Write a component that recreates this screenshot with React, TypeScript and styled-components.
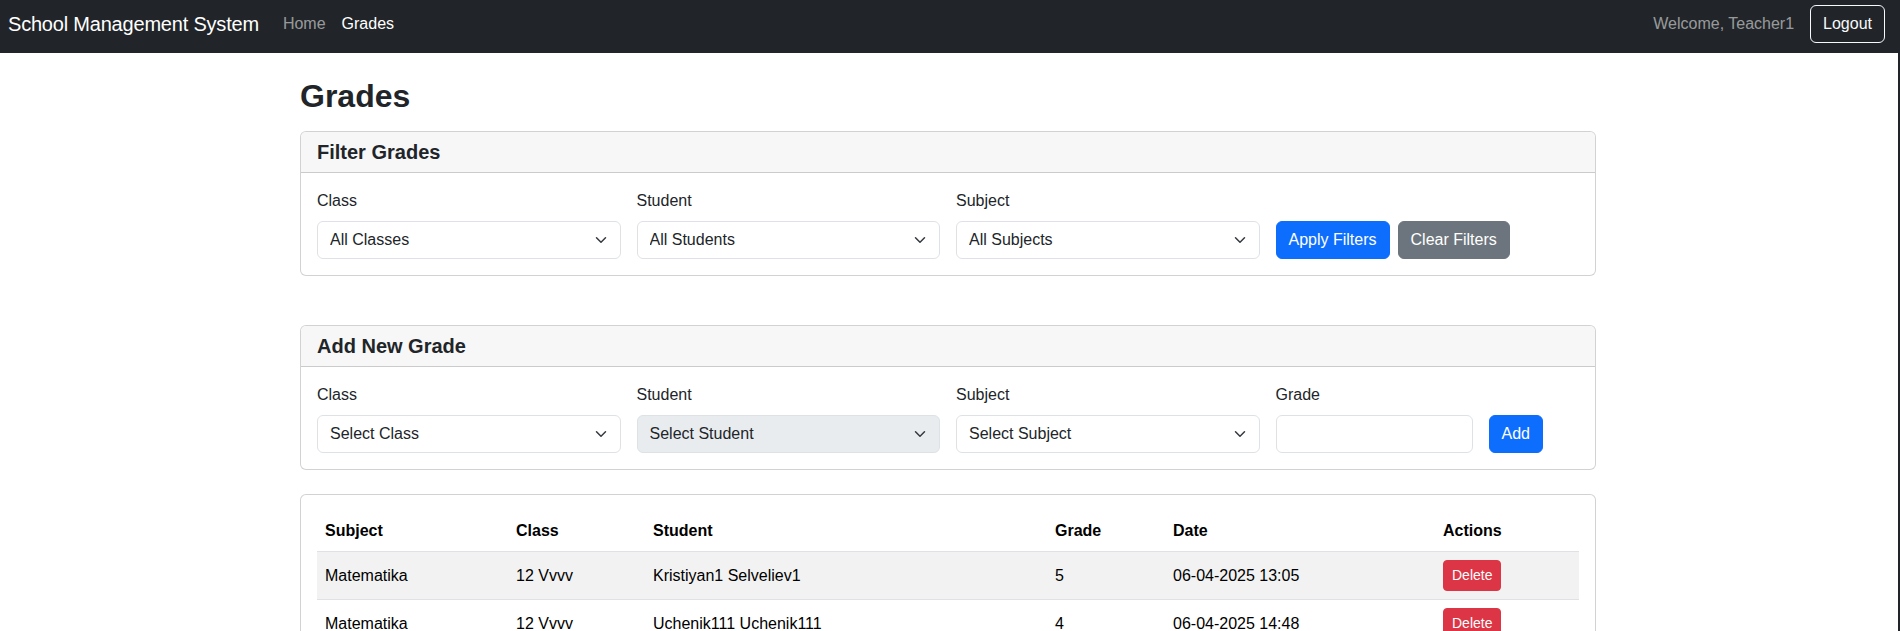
import React, { FC, ReactNode } from "react"
import styled, { createGlobalStyle } from "styled-components"

const GlobalStyle = createGlobalStyle`
  *, *::before, *::after {
    box-sizing: border-box;
  }
  body {
    margin: 0;
    font-family: "Liberation Sans", Arial, sans-serif;
    font-size: 16px;
    line-height: 1.5;
    color: rgb(33, 37, 41);
    background-color: rgb(255, 255, 255);
  }
`

const Shell = styled.div`
  min-height: 631px;
  border-right: 2px solid rgb(33, 37, 41);
`

const Navbar = styled.nav`
  display: flex;
  align-items: center;
  height: 53px;
  padding: 5px 13px 10px 8px;
  background-color: rgb(33, 37, 41);
`

const Brand = styled.a`
  margin-right: 16px;
  font-size: 20px;
  line-height: 30px;
  letter-spacing: -0.2px;
  color: rgb(255, 255, 255);
  text-decoration: none;
  white-space: nowrap;
`

const NavList = styled.ul`
  display: flex;
  margin: 0;
  padding: 0;
  list-style: none;
`

const NavLink = styled.a<{ active?: boolean }>`
  display: block;
  padding: 0 8px;
  color: ${props => (props.active ? "rgb(255, 255, 255)" : "rgba(255, 255, 255, 0.55)")};
  text-decoration: none;
`

const Spacer = styled.div`
  flex: 1;
`

const Welcome = styled.span`
  margin-right: 16px;
  color: rgba(255, 255, 255, 0.55);
`

const Button = styled.button<{ variant?: "primary" | "secondary" | "danger" | "light"; small?: boolean }>`
  display: inline-block;
  padding: ${props => (props.small ? "4px 8px" : "6px 12px")};
  font-family: inherit;
  font-size: ${props => (props.small ? "14px" : "16px")};
  line-height: 1.5;
  border-radius: ${props => (props.small ? "4px" : "6px")};
  border: 1px solid
    ${props =>
      props.variant === "secondary"
        ? "rgb(108, 117, 125)"
        : props.variant === "danger"
        ? "rgb(220, 53, 69)"
        : props.variant === "light"
        ? "rgb(248, 249, 250)"
        : "rgb(13, 110, 253)"};
  background-color: ${props =>
    props.variant === "secondary"
      ? "rgb(108, 117, 125)"
      : props.variant === "danger"
      ? "rgb(220, 53, 69)"
      : props.variant === "light"
      ? "transparent"
      : "rgb(13, 110, 253)"};
  color: ${props => (props.variant === "light" ? "rgb(248, 249, 250)" : "rgb(255, 255, 255)")};
  white-space: nowrap;
  cursor: pointer;
`

const Main = styled.main`
  max-width: 1320px;
  margin: 0 auto;
  padding: 24px 12px 0;
  position: relative;
  left: -1px;
`

const PageTitle = styled.h2`
  margin: 0 0 16px;
  font-size: 32px;
  font-weight: 700;
  line-height: 1.2;
`

const Card = styled.section<{ gapBelow?: number }>`
  margin-bottom: ${props => props.gapBelow ?? 24}px;
  border: 1px solid rgba(0, 0, 0, 0.175);
  border-radius: 6px;
  background-color: rgb(255, 255, 255);
`

const CardHeader = styled.div`
  padding: 8px 16px;
  background-color: rgb(247, 247, 247);
  border-bottom: 1px solid rgba(0, 0, 0, 0.175);
  border-radius: 5px 5px 0 0;
`

const CardTitle = styled.h5`
  margin: 0;
  font-size: 20px;
  font-weight: 700;
  line-height: 1.2;
`

const CardBody = styled.div`
  padding: 16px;
`

const FormGrid = styled.div`
  display: grid;
  grid-template-columns: repeat(12, 1fr);
  column-gap: 16px;
`

const Field = styled.div<{ span: number }>`
  grid-column: span ${props => props.span};
  display: flex;
  flex-direction: column;
`

const ButtonCell = styled.div<{ span: number }>`
  grid-column: span ${props => props.span};
  display: flex;
  align-items: flex-end;
  gap: 8px;
`

const Label = styled.label`
  display: block;
  margin-bottom: 8px;
`

const SelectWrap = styled.div`
  position: relative;
`

const Select = styled.select`
  display: block;
  width: 100%;
  height: 38px;
  padding: 6px 36px 6px 12px;
  font-family: inherit;
  font-size: 16px;
  line-height: 1.5;
  color: rgb(33, 37, 41);
  background-color: rgb(255, 255, 255);
  border: 1px solid rgb(222, 226, 230);
  border-radius: 6px;
  appearance: none;
  outline: none;

  &:disabled {
    color: rgb(33, 37, 41);
    background-color: rgb(233, 236, 239);
    opacity: 1;
  }
`

const Chevron = styled.svg`
  position: absolute;
  right: 14px;
  top: 13px;
  width: 12px;
  height: 12px;
  pointer-events: none;
`

const TextInput = styled.input`
  display: block;
  width: 100%;
  height: 38px;
  padding: 6px 12px;
  font-family: inherit;
  font-size: 16px;
  line-height: 1.5;
  color: rgb(33, 37, 41);
  border: 1px solid rgb(222, 226, 230);
  border-radius: 6px;
  outline: none;
`

const Table = styled.table`
  width: 100%;
  margin-bottom: 16px;
  border-collapse: collapse;
  table-layout: fixed;
  color: rgb(0, 0, 0);
  vertical-align: top;
`

const Th = styled.th`
  padding: 8px;
  text-align: left;
  font-weight: 700;
  border-bottom: 1px solid rgb(222, 226, 230);
`

const Tr = styled.tr<{ striped?: boolean }>`
  background-color: ${props => (props.striped ? "rgb(242, 242, 242)" : "transparent")};
`

const Td = styled.td`
  padding: 8px;
  border-bottom: 1px solid rgb(222, 226, 230);
`

interface DropdownProps {
  placeholder: string
  disabled?: boolean
}

const Dropdown: FC<DropdownProps> = ({ placeholder, disabled }) => (
  <SelectWrap>
    <Select disabled={disabled} defaultValue="">
      <option value="">{placeholder}</option>
    </Select>
    <Chevron viewBox="0 0 16 16">
      <path
        d="m2 5 6 6 6-6"
        fill="none"
        stroke="rgb(52, 58, 64)"
        strokeWidth="2"
        strokeLinecap="round"
        strokeLinejoin="round"
      />
    </Chevron>
  </SelectWrap>
)

const FormField: FC<{ span: number; label: string; children: ReactNode }> = ({ span, label, children }) => (
  <Field span={span}>
    <Label>{label}</Label>
    {children}
  </Field>
)

const grades = [
  { subject: "Matematika", className: "12 Vvvv", student: "Kristiyan1 Selveliev1", grade: 5, date: "06-04-2025 13:05" },
  { subject: "Matematika", className: "12 Vvvv", student: "Uchenik111 Uchenik111", grade: 4, date: "06-04-2025 14:48" }
]

const columnWidths = [191, 137, 402, 118, 270, 144]

const App: FC = () => {
  return (
    <Shell>
      <GlobalStyle />
      <Navbar>
        <Brand href="#">School Management System</Brand>
        <NavList>
          <li>
            <NavLink href="#">Home</NavLink>
          </li>
          <li>
            <NavLink href="#" active>
              Grades
            </NavLink>
          </li>
        </NavList>
        <Spacer />
        <Welcome>Welcome, Teacher1</Welcome>
        <Button variant="light">Logout</Button>
      </Navbar>

      <Main>
        <PageTitle>Grades</PageTitle>

        <Card gapBelow={49}>
          <CardHeader>
            <CardTitle>Filter Grades</CardTitle>
          </CardHeader>
          <CardBody>
            <FormGrid>
              <FormField span={3} label="Class">
                <Dropdown placeholder="All Classes" />
              </FormField>
              <FormField span={3} label="Student">
                <Dropdown placeholder="All Students" />
              </FormField>
              <FormField span={3} label="Subject">
                <Dropdown placeholder="All Subjects" />
              </FormField>
              <ButtonCell span={3}>
                <Button variant="primary">Apply Filters</Button>
                <Button variant="secondary">Clear Filters</Button>
              </ButtonCell>
            </FormGrid>
          </CardBody>
        </Card>

        <Card>
          <CardHeader>
            <CardTitle>Add New Grade</CardTitle>
          </CardHeader>
          <CardBody>
            <FormGrid>
              <FormField span={3} label="Class">
                <Dropdown placeholder="Select Class" />
              </FormField>
              <FormField span={3} label="Student">
                <Dropdown placeholder="Select Student" disabled />
              </FormField>
              <FormField span={3} label="Subject">
                <Dropdown placeholder="Select Subject" />
              </FormField>
              <FormField span={2} label="Grade">
                <TextInput type="number" />
              </FormField>
              <ButtonCell span={1}>
                <Button variant="primary">Add</Button>
              </ButtonCell>
            </FormGrid>
          </CardBody>
        </Card>

        <Card>
          <CardBody>
            <Table>
              <colgroup>
                {columnWidths.map((w, i) => (
                  <col key={i} style={{ width: w }} />
                ))}
              </colgroup>
              <thead>
                <tr>
                  <Th>Subject</Th>
                  <Th>Class</Th>
                  <Th>Student</Th>
                  <Th>Grade</Th>
                  <Th>Date</Th>
                  <Th>Actions</Th>
                </tr>
              </thead>
              <tbody>
                {grades.map((g, i) => (
                  <Tr key={i} striped={i % 2 === 0}>
                    <Td>{g.subject}</Td>
                    <Td>{g.className}</Td>
                    <Td>{g.student}</Td>
                    <Td>{g.grade}</Td>
                    <Td>{g.date}</Td>
                    <Td>
                      <Button variant="danger" small>
                        Delete
                      </Button>
                    </Td>
                  </Tr>
                ))}
              </tbody>
            </Table>
          </CardBody>
        </Card>
      </Main>
    </Shell>
  )
}

export default App
